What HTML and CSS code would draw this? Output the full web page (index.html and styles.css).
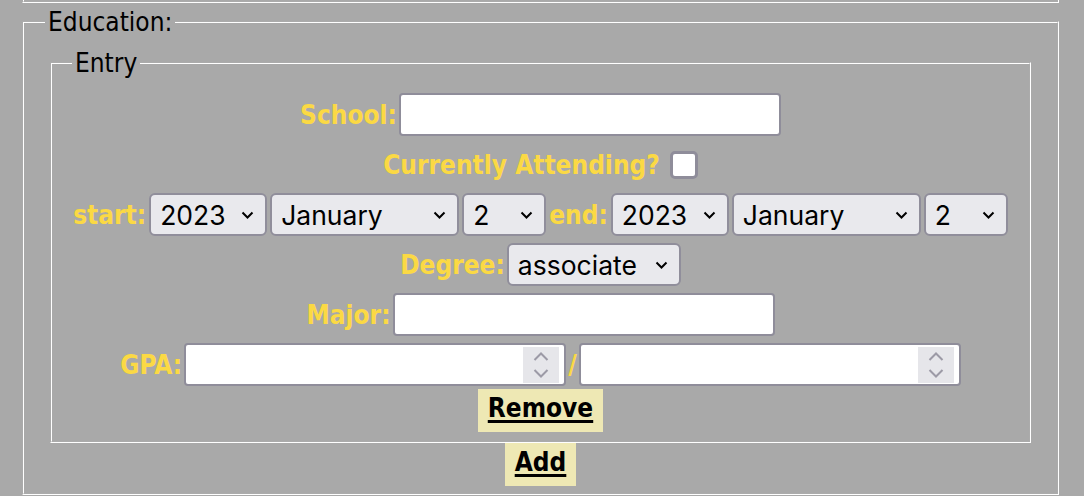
FILE: index.html
```html
<!DOCTYPE html>
<html>
<head>
<meta charset="utf-8">
<link rel="stylesheet" href="styles.css">
</head>
<body>
<div class="page">
  <div class="prev"></div>
  <fieldset class="edu">
    <legend>Education:</legend>
    <fieldset class="entry">
      <legend>Entry</legend>
      <div class="row">
        <label class="lbl">School:</label><input class="txt" type="text">
      </div>
      <div class="row">
        <label class="lbl">Currently Attending?</label><input class="chk" type="checkbox">
      </div>
      <div class="row dates">
        <label class="lbl">start:</label>
        <select class="sel year"><option>2023</option></select>
        <select class="sel month"><option>January</option></select>
        <select class="sel day"><option>2</option></select>
        <label class="lbl">end:</label>
        <select class="sel year"><option>2023</option></select>
        <select class="sel month"><option>January</option></select>
        <select class="sel day"><option>2</option></select>
      </div>
      <div class="row">
        <label class="lbl">Degree:</label><select class="sel degree"><option>associate</option></select>
      </div>
      <div class="row">
        <label class="lbl">Major:</label><input class="txt" type="text">
      </div>
      <div class="row gpa">
        <label class="lbl">GPA:</label>
        <span class="num"><input type="text"><span class="spin"><svg width="16" height="26" viewBox="0 0 16 26"><path d="M1.5 8 L8 1.5 L14.5 8 M1.5 18 L8 24.5 L14.5 18" fill="none" stroke="#9c9aa6" stroke-width="2"/></svg></span></span>
        <span class="lbl slash">/</span>
        <span class="num"><input type="text"><span class="spin"><svg width="16" height="26" viewBox="0 0 16 26"><path d="M1.5 8 L8 1.5 L14.5 8 M1.5 18 L8 24.5 L14.5 18" fill="none" stroke="#9c9aa6" stroke-width="2"/></svg></span></span>
      </div>
      <div class="row btnrow">
        <button class="btn" type="button">Remove</button>
      </div>
    </fieldset>
    <div class="row addrow">
      <button class="btn" type="button">Add</button>
    </div>
  </fieldset>
</div>
</body>
</html>
```

FILE: styles.css
```css
html, body {
  margin: 0;
  padding: 0;
  background: #a9a9a9;
}
body {
  font-family: "DejaVu Sans", Verdana, sans-serif;
  font-stretch: condensed;
}
.page {
  width: 1037px;
  margin-left: 22px;
}
.prev {
  height: 1px;
  border: 2px groove #ffffff;
  border-top: none;
}
fieldset {
  margin: 0;
  border: 2px groove #ffffff;
  min-width: 0;
}
legend {
  font-size: 26px;
  line-height: 30px;
  padding: 0 3px;
  color: #000;
}
.edu {
  margin-top: 4px;
  padding: 11px 21px 7px;
}
.entry {
  margin: 0 5px;
  padding: 15px 20px 9px;
}
.row {
  display: flex;
  justify-content: center;
  align-items: center;
  height: 43px;
  margin-bottom: 7px;
}
.dates { gap: 3px; }
.gpa { margin-bottom: 3px; gap: 2px; }
.btnrow, .addrow { margin-bottom: 0; }
.lbl {
  font-weight: bold;
  font-size: 26px;
  color: #fbd944;
  margin-right: 2px;
}
.dates .lbl { margin-right: 0; }
.gpa .lbl { margin-right: 0; }
.txt {
  box-sizing: border-box;
  width: 382px;
  height: 43px;
  border: 2px solid #8f8d9a;
  border-radius: 4px;
  background: #fff;
  margin: 0;
}
.chk {
  -webkit-appearance: none;
  appearance: none;
  box-sizing: border-box;
  width: 28px;
  height: 28px;
  border: 3px solid #8f8d9a;
  border-radius: 5px;
  background: #fff;
  margin: 0 0 0 8px;
}
.sel {
  -webkit-appearance: none;
  appearance: none;
  box-sizing: border-box;
  height: 43px;
  margin: 0;
  border: 2px solid #908e9b;
  border-radius: 6px;
  background-color: #e9e9ed;
  background-image: url("data:image/svg+xml;utf8,<svg xmlns='http://www.w3.org/2000/svg' width='13' height='8' viewBox='0 0 13 8'><path d='M1.5 1.5 L6.5 6.5 L11.5 1.5' fill='none' stroke='black' stroke-width='2'/></svg>");
  background-repeat: no-repeat;
  background-position: right 11px center;
  font-family: Inter, "Liberation Sans", sans-serif;
  font-stretch: normal;
  font-size: 26.5px;
  color: #000;
  padding: 0 28px 0 9px;
}
.year { width: 118px; }
.month { width: 189px; }
.day { width: 84px; }
.degree { width: 174px; }
.num {
  box-sizing: border-box;
  display: inline-flex;
  align-items: center;
  width: 382px;
  height: 43px;
  border: 2px solid #8f8d9a;
  border-radius: 4px;
  background: #fff;
  padding: 2px 5px 1px 2px;
}
.num input {
  flex: 1;
  min-width: 0;
  height: 100%;
  border: none;
  outline: none;
  background: transparent;
  padding: 0;
  margin: 0;
}
.spin {
  width: 36px;
  height: 36px;
  background: #e6e6ea;
  display: flex;
  align-items: center;
  justify-content: center;
}
.spin svg { display: block; }
.slash { margin: 0; }
.btn {
  height: 43px;
  padding: 0 10px 5px;
  border: none;
  border-radius: 0;
  background: #eee8b4;
  font-family: "DejaVu Sans", Verdana, sans-serif;
  font-stretch: condensed;
  font-weight: bold;
  font-size: 26px;
  color: #000;
  text-decoration: underline;
  text-decoration-thickness: 3px;
  text-underline-offset: 3px;
  margin: 0;
}
```
